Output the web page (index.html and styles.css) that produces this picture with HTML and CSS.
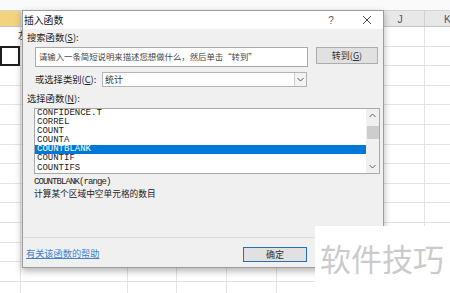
FILE: index.html
```html
<!DOCTYPE html>
<html lang="zh-CN">
<head>
  <meta charset="UTF-8">
  <meta name="viewport" content="width=device-width, initial-scale=1.0">
  <title>插入函数</title>
  <link rel="stylesheet" href="styles.css">
</head>
<body>
  <div class="sheet">
    <div class="topbar"></div>
    <div class="col-heads">
      <div class="col-head active"></div>
      <div class="col-head">D</div>
      <div class="col-head">E</div>
      <div class="col-head">F</div>
      <div class="col-head">G</div>
      <div class="col-head">H</div>
      <div class="col-head">I</div>
      <div class="col-head">J</div>
      <div class="col-head">K</div>
    </div>
    <div class="cells">
      <div class="col">
        <div class="cell-text">左</div>
        <div class="cell-sel"></div>
      </div>
      <div class="col"></div>
      <div class="col"></div>
      <div class="col"></div>
      <div class="col"></div>
      <div class="col"></div>
      <div class="col"></div>
      <div class="col"></div>
      <div class="col"></div>
    </div>
  </div>

  <!-- the insert-function dialog floats over the sheet -->
  <div class="dialog">
    <div class="titlebar">
      <span class="title">插入函数</span>
      <span class="help">?</span>
      <span class="close">
        <svg width="10" height="10" viewBox="0 0 10 10"><path d="M1 1L9 9M9 1L1 9" stroke="#444" stroke-width="1" fill="none"/></svg>
      </span>
    </div>
    <div class="body">
      <div class="label">搜索函数(<u>S</u>):</div>
      <div class="search-row">
        <div class="search-box">请输入一条简短说明来描述您想做什么，然后单击“转到”</div>
        <button class="btn go">转到(<u>G</u>)</button>
      </div>
      <div class="cat-row">
        <span class="cat-label">或选择类别(<u>C</u>):</span>
        <div class="select">
          <span class="select-value">统计</span>
          <span class="select-arrow">
            <svg width="7" height="5" viewBox="0 0 7 5"><path d="M0.5 1L3.5 4L6.5 1" stroke="#555" stroke-width="1" fill="none"/></svg>
          </span>
        </div>
      </div>
      <div class="label list-label">选择函数(<u>N</u>):</div>
      <div class="fn-list">
        <ul class="fn-items">
          <li>CONFIDENCE.T</li>
          <li>CORREL</li>
          <li>COUNT</li>
          <li>COUNTA</li>
          <li class="selected">COUNTBLANK</li>
          <li>COUNTIF</li>
          <li>COUNTIFS</li>
        </ul>
        <div class="scrollbar">
          <span class="arrow">
            <svg width="7" height="5" viewBox="0 0 7 5"><path d="M0.5 4L3.5 1L6.5 4" stroke="#606060" stroke-width="1" fill="none"/></svg>
          </span>
          <span class="thumb"></span>
          <span class="track"></span>
          <span class="arrow">
            <svg width="7" height="5" viewBox="0 0 7 5"><path d="M0.5 1L3.5 4L6.5 1" stroke="#606060" stroke-width="1" fill="none"/></svg>
          </span>
        </div>
      </div>
      <div class="syntax">COUNTBLANK(range)</div>
      <div class="desc">计算某个区域中空单元格的数目</div>
    </div>
    <div class="footer">
      <a class="help-link" href="#">有关该函数的帮助</a>
      <button class="btn default">确定</button>
    </div>
  </div>

  <div class="watermark">软件技巧</div>
</body>
</html>
```

FILE: styles.css
```css
body {
  margin: 0;
  width: 450px;
  height: 293px;
  overflow: hidden;
  font-family: "Noto Sans CJK SC", sans-serif;
  color: #222;
}

/* spreadsheet behind the dialog */
.sheet {
  height: 293px;
  display: flex;
  flex-direction: column;
  background: #fff;
}
.topbar {
  height: 11px;
  box-sizing: border-box;
  border-bottom: 1px solid #d4d4d4;
  background: #fafafa;
}
.col-heads,
.cells {
  display: grid;
  grid-template-columns: 21px 107px 49px 50px 50px 50px 49px 49px 25px;
}
.col-heads {
  height: 16px;
  box-sizing: border-box;
  border-bottom: 1px solid #c6c6c6;
  background: #e8e8e8;
  font-family: "Liberation Sans", sans-serif;
  font-size: 10.5px;
  color: #555;
}
.col-head {
  display: flex;
  align-items: center;
  justify-content: center;
  border-right: 1px solid #d2d2d2;
}
.col-head:last-child {
  justify-content: flex-start;
  padding-left: 19px;
  border-right: none;
  overflow: hidden;
}
.col-head.active {
  background: #f3d47c;
}
.cells {
  flex: 1;
  background-image: repeating-linear-gradient(to bottom, transparent 0 18.6px, #e3e3e3 18.6px 19.6px);
}
.col {
  border-right: 1px solid #e3e3e3;
}
.col:last-child {
  border-right: none;
}
.cell-text {
  height: 19.6px;
  padding-left: 18px;
  font-size: 10px;
  line-height: 16px;
  color: #333;
}
.cell-sel {
  height: 20.6px;
  margin-top: -1px;
  box-sizing: border-box;
  border: 2px solid #1f1f1f;
}

/* dialog */
.dialog {
  position: absolute;
  left: 22px;
  top: 10px;
  width: 362px;
  height: 258px;
  box-sizing: border-box;
  border: 1px solid #9c9c9c;
  background: #f0f0f0;
  box-shadow: 0 3px 7px rgba(0, 0, 0, 0.3);
  display: flex;
  flex-direction: column;
}
.titlebar {
  height: 18px;
  padding: 0 1px 0 1px;
  display: flex;
  align-items: center;
  background: #fff;
}
.title {
  font-size: 9.8px;
  color: #111;
}
.help {
  margin-left: auto;
  width: 20px;
  text-align: center;
  font-family: "Liberation Sans", sans-serif;
  font-size: 10px;
  color: #555;
}
.close {
  margin-left: 11px;
  width: 30px;
  display: flex;
  justify-content: center;
}
.body {
  flex: 1;
  display: flex;
  flex-direction: column;
  padding: 0 3px 0 4px;
  font-size: 9.3px;
}
.label {
  margin-top: 2px;
  line-height: 13px;
}
u {
  text-decoration-thickness: 1px;
}
.search-row {
  margin: 3px 2px 0 8px;
  display: flex;
  align-items: flex-start;
  gap: 8px;
}
.search-box {
  flex: 1;
  height: 20px;
  box-sizing: border-box;
  border: 1px solid #a9a9a9;
  background: #fff;
  padding: 1px 3px;
  font-size: 8.4px;
  line-height: 14px;
  color: #444;
  white-space: nowrap;
}
.btn {
  width: 62px;
  height: 17px;
  padding: 0;
  box-sizing: border-box;
  border: 1px solid #adadad;
  background: #e1e1e1;
  font-family: "Noto Sans CJK SC", sans-serif;
  font-size: 9px;
  color: #333;
}
.cat-row {
  margin: 5px 0 0 8px;
  height: 15px;
  display: flex;
  align-items: center;
}
.cat-label {
  width: 67px;
  line-height: 15px;
}
.select {
  width: 205px;
  height: 15px;
  box-sizing: border-box;
  border: 1px solid #b4b4b4;
  background: #fff;
  display: flex;
  align-items: center;
}
.select-value {
  flex: 1;
  padding-left: 2px;
  font-size: 9px;
  color: #333;
}
.select-arrow {
  width: 12px;
  height: 13px;
  box-sizing: border-box;
  border-left: 1px solid #cfcfcf;
  background: #f3f3f3;
  display: flex;
  align-items: center;
  justify-content: center;
}
.list-label {
  margin-top: 5px;
}
.fn-list {
  margin: 3px 0 0 7px;
  height: 66px;
  box-sizing: border-box;
  border: 1px solid #a9a9a9;
  background: #fff;
  display: flex;
}
.fn-items {
  flex: 1;
  margin: 0;
  padding: 0;
  list-style: none;
  font-family: "Liberation Mono", monospace;
  font-size: 9px;
  color: #222;
}
.fn-items li {
  height: 9.1px;
  line-height: 9.1px;
  padding-left: 2px;
}
.fn-items li.selected {
  background: #0078d7;
  color: #fff;
}
.scrollbar {
  width: 13px;
  background: #f0f0f0;
  display: flex;
  flex-direction: column;
  align-items: center;
}
.arrow {
  height: 13px;
  display: flex;
  align-items: center;
}
.thumb {
  width: 12px;
  height: 13px;
  margin-top: 4px;
  background: #cdcdcd;
}
.track {
  flex: 1;
}
.syntax {
  margin: 3px 0 0 7px;
  line-height: 11px;
  font-family: "Liberation Mono", monospace;
  font-size: 9px;
  letter-spacing: -0.9px;
  color: #222;
}
.desc {
  margin-left: 7px;
  line-height: 12px;
  font-size: 8.7px;
  color: #222;
}
.footer {
  height: 30px;
  box-sizing: border-box;
  border-top: 1px solid #dcdcdc;
  padding: 9px 76px 0 3px;
  display: flex;
  align-items: flex-start;
}
.help-link {
  margin-right: auto;
  line-height: 13px;
  font-size: 9.2px;
  color: #3f82cc;
  text-decoration: underline;
  text-underline-offset: 1px;
}
.btn.default {
  width: 64px;
  height: 15px;
  border-color: #2a6cb4;
}

/* site watermark over the corner */
.watermark {
  position: absolute;
  left: 315px;
  top: 226px;
  right: 0;
  bottom: 0;
  padding: 15px 0 0 5px;
  background: #fff;
  font-size: 31px;
  line-height: 34px;
  color: #cbcbcb;
  white-space: nowrap;
}
```
